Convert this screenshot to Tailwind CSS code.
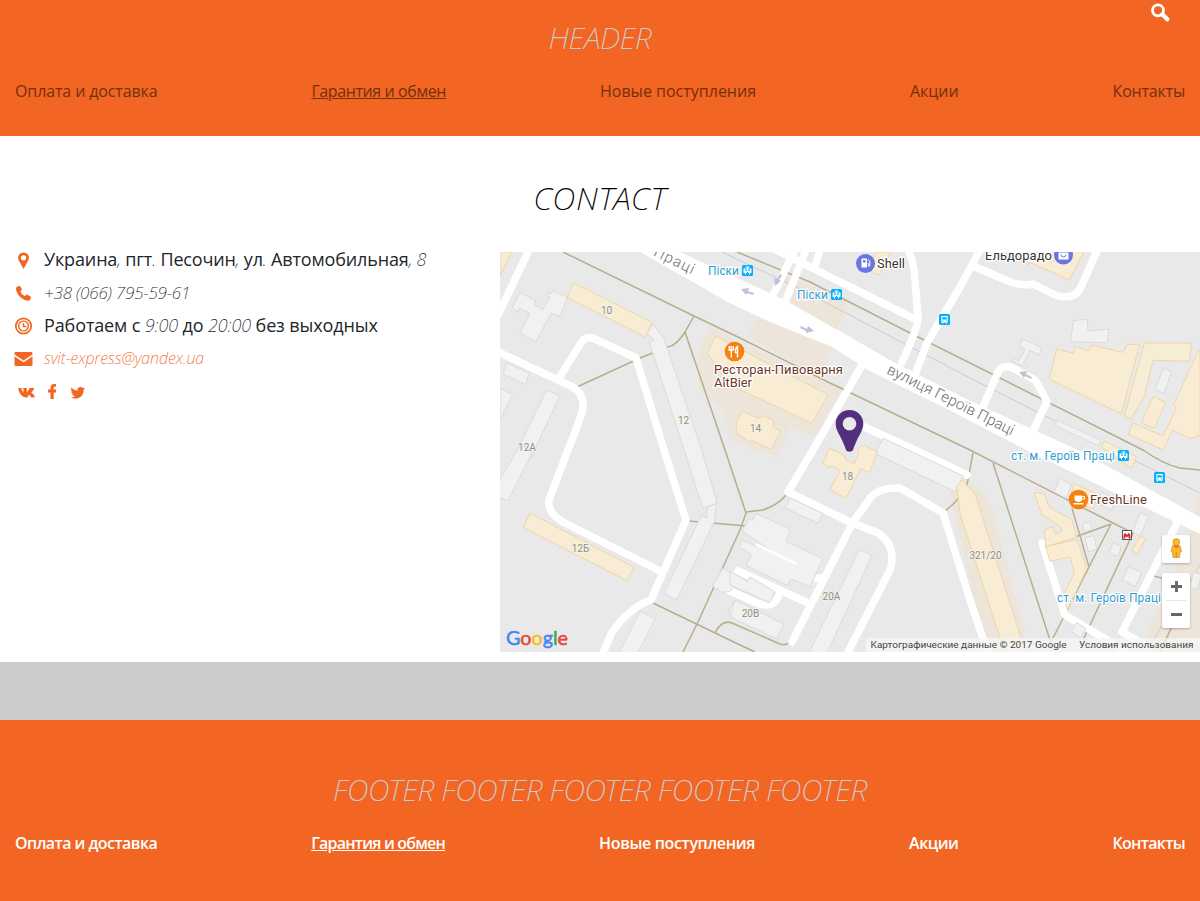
<!DOCTYPE html>
<html lang="ru">
<head>
<meta charset="utf-8">
<title>Contact</title>
<script src="https://cdn.jsdelivr.net/npm/@tailwindcss/browser@4"></script>
</head>
<body class="bg-[#ccc] font-['Open_Sans','Noto_Sans',sans-serif] text-[#212529] w-[1200px] h-[901px] overflow-hidden">
<header class="relative h-[136px] bg-[#f26522] pt-[18px]">
  <h1 class="text-center font-['Noto_Sans',sans-serif] font-extralight italic text-[30px] leading-[40px] text-[#ccc]"><span class="tracking-[-0.5px]">HEADER</span></h1>
  <svg class="absolute left-[1151px] top-[3px]" width="19" height="19" viewBox="0 0 19 19" fill="none" stroke="#fff"><circle cx="7" cy="7.3" r="5.5" stroke-width="2.8"/><path d="M11.5 11.5 16.3 16.3" stroke-width="4.4" stroke-linecap="round"/></svg>
  <nav class="mt-[21px] flex justify-between px-[15px] text-[16px] leading-6 text-[#73300f]">
    <a class="tracking-[-0.12px]">Оплата и доставка</a><a class="underline tracking-[-0.4px]">Гарантия и обмен</a><a>Новые поступления</a><a>Акции</a><a class="tracking-[-0.2px]">Контакты</a>
  </nav>
</header>
<main class="h-[526px] bg-white pt-[42px]">
  <h2 class="text-center font-['Noto_Sans',sans-serif] font-extralight italic text-[32px] leading-[40px] text-black tracking-[0.7px]">CONTACT</h2>
  <div class="mt-[34px] flex">
    <ul class="w-[500px] pl-[14px] text-[18px] leading-[33px] -mt-[9px]">
      <li class="flex h-[33px] items-center"><span class="w-[30px]"><svg width="19" height="20" viewBox="0 0 19 20" fill="#f26522"><path fill-rule="evenodd" d="M9.5 2.5c-3 0-5.4 2.3-5.4 5.3 0 1.4.6 2.4 1.100 3.400L9.500 19l4.300-7.800c.5-1 1.100-2 1.100-3.400 0-3-2.400-5.300-5.400-5.300zm0 2.700a2.600 2.600 0 1 1 0 5.200 2.600 2.600 0 0 1 0-5.200z"/></svg></span>
        <span class="whitespace-nowrap tracking-[-0.15px]">Украина<i class="font-['Noto_Sans'] font-extralight">,</i> пгт<i class="font-['Noto_Sans'] font-extralight">.</i> Песочин<i class="font-['Noto_Sans'] font-extralight">,</i> ул<i class="font-['Noto_Sans'] font-extralight">.</i> Автомобильная<i class="font-['Noto_Sans'] font-extralight">, 8</i></span></li>
      <li class="flex h-[33px] items-center"><span class="w-[30px]"><svg width="19" height="20" viewBox="0 0 19 20" fill="#f26522"><path d="M3 3.800 5.800 2.700 8 6.300 6.400 8.600c.8 2 2.400 3.600 4.400 4.500l1.900-1.600 4.400 2.200-.9 3c-.6 1-2 1.300-3.400.9C7.400 16.400 2.400 11 2 5.800c0-.9.300-1.600 1-2z"/></svg></span>
        <span class="font-['Noto_Sans'] font-extralight italic text-[17px] tracking-[-0.2px]">+38 (066) 795-59-61</span></li>
      <li class="flex h-[33px] items-center"><span class="w-[30px]"><svg width="19" height="20" viewBox="0 0 19 20" fill="none" stroke="#f26522"><circle cx="9.500" cy="10" r="7.700" stroke-width="1.700"/><circle cx="9.500" cy="10" r="4.900" stroke-width="1.400"/><path d="M9.500 7v3.600h3" stroke-width="1.500"/></svg></span>
        <span class="whitespace-nowrap tracking-[-0.12px]">Работаем с <i class="font-['Noto_Sans'] font-extralight">9:00</i> до <i class="font-['Noto_Sans'] font-extralight">20:00</i> без выходных</span></li>
      <li class="flex h-[33px] items-center"><span class="w-[30px]"><svg width="19" height="20" viewBox="0 0 19 20" fill="#f26522"><path d="M1 3h16.500l1 1v1.500L9.500 11.500.500 5.500V4z"/><path d="M.500 7.300l6.500 4.500 2.500 1.500 2.500-1.500 6.500-4.500V16l-1 1H1.500l-1-1z"/></svg></span>
        <span class="font-['Noto_Sans'] font-extralight italic text-[16px] text-[#f26522] tracking-[-0.1px]">svit-express@yandex.ua</span></li>
      <li class="flex h-[33px] items-center"><svg class="ml-[3px]" width="70" height="18" viewBox="17 383 70 18" fill="#f26522"><path d="M18 388h3.300c.5 2 1.300 3.700 2.200 4.500V389l-1-1h4.300v4.200c1-.7 2-2.400 2.800-4.200H34.300c-.4 1.800-1.700 3.200-3 4.500 1.500 1.200 3 2.800 3.800 4.800l-3.700.1c-.7-1-1.700-2.400-2.800-2.700-.3 1.500-.6 2.800-1.800 2.800-4.700.2-7.300-3.500-8.800-9.700z"/><path d="M56 384h-2c-2.300 0-3.500 1.400-3.500 3.700v1.800H48v3h2.500V399h3.200v-6.500h2.200l.4-3h-2.600v-1.700c0-.7.300-1.100 1.100-1.100H56z"/><path d="M85 388.300c-.6.3-1 .4-1.600.5.600-.4 1-.9 1.200-1.500-.6.300-1.200.6-1.900.7a3 3 0 0 0-5.200 2.600c-2.400-.1-4.500-1.200-6-3-.9 1.400-.4 3.100.9 4l-1.200-.3c0 1.400 1 2.500 2.300 2.800l-1.200.1c.4 1.200 1.500 1.900 2.700 2a6 6 0 0 1-4 1.100c5.500 3.300 12.600 0 12.600-7.400.5-.4 1-.9 1.400-1.600z"/></svg></li>
    </ul>
    <svg class="block shrink-0" width="700" height="400" viewBox="500 252 700 400" font-family="Roboto, sans-serif">
      <rect x="500" y="252" width="700" height="400" fill="#e9e9e9"/>
      <!-- commercial areas -->
      <g fill="#eee5da">
        <path d="M785 275 849 303 834 336 785 300zM757 316 832 346 820 380 748 336zM710 325 735 340 842 388 815 437 790 427 778 458 730 440 725 412 700 390 697 355z"/>
        <path d="M948 483 965 475 990 500 1030 652H985z"/>
        <path d="M1200 490V652H1160L1145 640 1185 545z"/>
      </g>
      <!-- footpaths -->
      <g fill="none" stroke="#b6ae8c" stroke-width="1.500">
        <path d="M563 252 694 316 740 338 830 383 970 450 1107 520 1133 533 1083 640"/>
        <path d="M737 252 810 282 920 338 970 363 1143 450Q1165 465 1180 468L1200 470"/>
        <path d="M694 316 685 332 725 450 746 513 740 530 697 624 683 652"/>
        <path d="M685 332Q677 345 668 347L640 358 577 387M689 521 746 526M746 512 763 510Q778 505 786 495M653 603 740 645 755 652M715 633Q722 619 732 623L780 644Q786 646 790 642"/>
        <path d="M993 463 1050 640M973 453 967 485Q960 500 945 511M1072 508 1089 567M1111 524 1089 567 1050 644M1075 537 1111 524M1154 576 1168 580M1175 620 1160 652"/>
      </g>
      <path d="M722 252 798 288 970 378 1057 422M1120 453 1200 493M1200 565 1150 645" fill="none" stroke="#ccc" stroke-width="1"/>
      <!-- side roads -->
      <g fill="none" stroke="#fff" stroke-width="7.500" stroke-linejoin="round" stroke-linecap="round">
        <path d="M529 250 498 315M498 352 558 380 573 387Q584 394 583 408Q582 415 568 450L549 500Q547 513 563 522L662 572"/>
        <path d="M559 378 581 343Q586 335 595 339L636 358 664 450 686 520 651 600Q630 607 612 632L603 653"/>
        <path d="M795 250 772 297M806 250 786 300M820 250 815 266M776 250 917 320M908 250Q914 262 915 280L918 318Q918 328 902 362M980 250 960 287 927 343 915 375"/>
        <path d="M973 266 1013 283Q1023 286 1033 284L1055 295Q1075 301 1081 287L1097 251"/>
        <path d="M983 407 998 372Q1001 365 1011 367L1035 380Q1040 387 1047 402L1032 433"/>
        <path d="M865 360 813 450 788 492 850 522 878 533Q892 542 892 558Q892 566 889 572L847 654"/>
        <path d="M860 425 915 450 967 475M792 642 853 522 871 497Q880 487 900 488L943 513 970 600 988 653"/>
        <path d="M808 603 738 571M728 590 757 603Q773 609 778 597L780 593M814 578 820 578M1042 543 1065 615 1107 640 1125 652M1177 523 1122 632M1122 632 1145 645"/>
      </g>
      <path fill="#fff" d="M640 252H680L730 275 770 293 788 302 850 337 890 360 960 396 1078 450 1200 517V534L1030 452 955 413 870 371 832 347 770 322 728 302z"/>
      <!-- grey buildings, grouped by map tile -->
      <g fill="#f1f1f1" stroke="#dadada" stroke-width="3">
        <g transform="translate(500 250) scale(.33333)">
          <path d="M60 127 107 152 104 165 128 178 150 142 141 136 147 126 154 131 161 121 203 143 184 187 178 200 154 189 107 276 60 248 90 191 60 174 52 187 38 170z"/>
          <path d="M22 339 88 370 76 404 8 372zM140 420 180 438 90 628 48 608zM0 415 38 434 0 510zM458 222 492 265 605 600 652 760 608 774 448 276 462 270 442 250z"/>
        </g>
        <g transform="translate(500 450) scale(.33333)">
          <path d="M60-15 98 5 24 153-5 140 0 90zM622 172 648 160 643 215 530 450 492 430 604 196 620 204zM420 484 466 506 412 612H356zM668 355 725 385 690 425 665 427 637 408zM705 450 730 462V505L684 488z"/>
        </g>
        <g transform="translate(730 250) scale(.33333)"><path d="M460 565 700 678 675 725 435 610z"/></g>
        <g transform="translate(960 250) scale(.33333)"><path d="M340 212 382 208 384 242 446 238 442 278 332 275zM188 267 245 293 238 315 210 301 190 340 207 348 203 354 156 333 160 325 177 333 195 298 178 290zM290 510 422 570 416 588 286 527zM610 355 635 365 612 430 585 418z"/></g>
        <g transform="translate(730 450) scale(.33333)">
          <path d="M180 143 278 190 264 220 165 174zM78 190 181 238 167 274 279 326 240 411 182 386 172 406 48 347 64 313 27 291 36 270 150 320 36 243 57 207 68 211zM388 298 426 316 290 612H235zM16 450 161 522 140 567 0 500zM0 365 52 394 60 381 135 425 118 458 0 405z"/>
        </g>
        <g transform="translate(960 450) scale(.33333)"><path d="M300 85 335 105 318 145 282 125zM540 188 566 200 540 258 518 245zM390 215 398 238 374 245 366 222zM375 263 402 257 410 298 385 305zM460 278 484 290 475 320 446 310zM505 350 545 368 526 410 487 390zM350 518 378 535 362 563 334 545zM425 125 468 150 455 180 410 160zM700 365 725 375 710 420 690 410z"/></g>
      </g>
      <path d="M757 545 795 563" stroke="#fff" stroke-width="3" stroke-linecap="round"/>
      <!-- highlighted buildings -->
      <g fill="#f9ecd5" stroke="#ecd6a6" stroke-width="3">
        <g transform="translate(500 250) scale(.33333)"><path d="M222 99 456 217 436 261 202 143zM0 6H35L0 78zM645 258 984 434 936 520 690 405 622 310z"/></g>
        <g transform="translate(500 450) scale(.33333)"><path d="M90 189 402 352 381 392 70 233z"/></g>
        <g transform="translate(730 250) scale(.33333)"><path d="M38 484 85 505 98 497 131 512 130 531 152 543 124 598 62 570 55 575 20 548 18 520zM405 58 440 6H482L447 75z"/></g>
        <g transform="translate(960 250) scale(.33333)"><path d="M180 35 240 0H375L327 90 210 37 205 44zM290 297 340 310 345 290 387 302 393 285 490 307 502 283 539 283 484 491 268 388zM553 279 695 279 688 334 579 331 553 440 513 507 493 498zM580 439 617 458 582 535 544 518zM720 300V555L693 566 637 541 609 600 504 552 519 519 609 558 650 473 640 466 714 305zM433 573 530 620 515 655 424 590z"/></g>
        <g transform="translate(730 450) scale(.33333)"><path d="M298-6 346 17 343 25 372 42 388 8 382 0 400-15 442 5 418 68 400 60 392 55 348 146 300 118 331 62 303 47 298 54 279 39z"/></g>
        <g transform="translate(960 450) scale(.33333)"><path d="M5 90 45 130 185 570 194 612H135L0 190-10 110zM222 126 255 133 268 173 335 208 350 262 257 290 254 238 278 230 287 253 307 242 302 232 244 192zM257 290 352 268 380 358 322 480 310 435 343 370 330 320 270 334zM342 100 410 132 400 178 330 145zM540 258 557 266 532 312 515 302z"/></g>
      </g>
      <!-- direction arrows -->
      <g fill="#bfc1dc"><path d="M741 289 749 288 748 291 754 293 753 295 747 293 746 295z"/><path d="M814 331 808 326 807 329 801 326 800 328 806 331 806 333zM775 286 774 278 777 279 780 274 782 275 779 280 781 281z"/><path fill="#c4c4c4" d="M1019 372 1027 371 1026 374 1032 377 1031 379 1025 376 1024 378z"/></g>
      <!-- labels -->
      <g stroke="#fff" stroke-width="2.500" paint-order="stroke" stroke-linejoin="round">
        <g font-size="10" fill="#8f8f86" stroke="#f5f3ea" stroke-width="1.500" text-anchor="middle">
          <text x="606.500" y="314">10</text><text x="683.500" y="424">12</text><text x="755.500" y="432">14</text><text x="527" y="451">12А</text><text x="580.500" y="552">12Б</text><text x="847.500" y="480">18</text><text x="831.500" y="600">20А</text><text x="750.500" y="617">20В</text><text x="985.500" y="559">321/20</text>
        </g>
        <g font-size="12" fill="#2f9dd2">
          <text x="708" y="275" textLength="31">Піски</text><text x="797" y="299" textLength="31">Піски</text><text x="1011" y="460" textLength="104">ст. м. Героїв Праці</text><text x="1057" y="602" textLength="104">ст. м. Героїв Праці</text>
        </g>
        <g font-size="13" fill="#333"><text x="877" y="268" textLength="28">Shell</text><text x="985" y="260" textLength="67">Ельдорадо</text></g>
        <g font-size="13" fill="#6e3629"><text x="714" y="374" textLength="129">Ресторан-Пивоварня</text><text x="714" y="387" textLength="38">AltBier</text><text x="1090" y="504" textLength="57">FreshLine</text></g>
        <g font-size="15" font-weight="300" fill="#6c6c6c"><text transform="translate(886 373) rotate(26.500)" textLength="140">вулиця Героїв Праці</text><text transform="translate(636 247) rotate(26)" textLength="62">їв Праці</text></g>
      </g>
      <!-- transit stops -->
      <defs>
        <g id="tram"><rect width="11" height="11" rx="1.500" fill="#00b0ff"/><path d="M1.500 3.500h8v4.500h-8z" fill="#fff"/><path d="M3.500 2h4M5.500 2v2M3.500 7.500v2M7.500 7.500v2" fill="none" stroke="#fff"/><path d="M3 4.500h2v1.200H3zM6 4.500h2v1.200H6zM5 7h1v1H5z" fill="#00b0ff"/></g>
        <g id="bus"><rect width="11" height="11" rx="1.500" fill="#00b0ff"/><path d="M2.300 2h6.400v6.500H8v1H6.800v-1H4.200v1H3v-1h-.7z" fill="#fff"/><path d="M3.200 3.300h4.600v2.200H3.200zM3.300 6.600h1v1h-1zM6.700 6.600h1v1h-1z" fill="#00b0ff"/></g>
      </defs>
      <use href="#tram" x="742" y="265"/><use href="#tram" x="831" y="289"/><use href="#tram" x="1118" y="450"/><use href="#bus" x="939" y="314"/><use href="#bus" x="1154" y="472"/>
      <!-- places -->
      <circle cx="865.500" cy="263.500" r="9.500" fill="#6a77e0"/><path d="M861.500 258.500h5.500v9h-5.500z" fill="#fff"/><path d="M863 260h2.500v2.500H863z" fill="#6a77e0"/><path d="M868 259.500l1.800 1.500v5h-1.500v-3" fill="none" stroke="#fff"/>
      <circle cx="1063.500" cy="255" r="9.500" fill="#6a77e0"/><path d="M1058.500 252.500h10v7h-10z" fill="#fff"/><path d="M1061 254.500a2.500 2.500 0 0 0 5 0" stroke="#6a77e0" fill="none"/>
      <circle cx="734.500" cy="351.500" r="9.800" fill="#f5820f"/><path d="M731.300 346v11.500M729.300 346v4h4v-4M737.500 357.500v-11c-2 1-2.200 3-2 6h2" fill="none" stroke="#fff" stroke-width="1.400"/>
      <circle cx="1078.500" cy="499.500" r="9.800" fill="#f5820f"/><path d="M1074.500 495.500h7.500v3.500c0 2-1.500 3-3.500 3s-4-1-4-3zM1073.500 503h10v1.500h-10z" fill="#fff"/><path d="M1082 496.500h2.500v2.500h-2.500" stroke="#fff" fill="none"/>
      <rect x="1122.500" y="530.500" width="9" height="9" fill="#fff" stroke="#555"/><path d="M1123.500 538.500v-3l1.500-3 2 2.500 2-2.500 1.500 3v3h-2V536l-1.500 1.500-1.500-1.500v2.500z" fill="#e3202b"/>
      <!-- marker -->
      <path fill="#53307f" fill-rule="evenodd" d="M849.500 410c-7.800 0-13.800 6-13.800 13.500 0 6 3 9.500 6.500 17 1.500 3.500 3 6.500 3.800 9.500 1 2.200 6 2.200 7 0 .8-3 2.300-6 3.800-9.500 3.500-7.500 6.500-11 6.500-17 0-7.500-6-13.500-13.800-13.500zm0 7a6.800 6.800 0 1 1 0 13.600 6.800 6.800 0 0 1 0-13.600z"/>
      <!-- controls -->
      <g style="filter:drop-shadow(0 1px 1px #0004)"><rect x="1162" y="535" width="28" height="28" rx="2" fill="#fff"/><rect x="1162" y="573" width="28" height="55" rx="2" fill="#fff"/></g>
      <path d="M1166 600.500h20" stroke="#e6e6e6"/><path d="M1171 586.500h11M1176.500 581v11M1171 614.500h11" stroke="#666" stroke-width="2.800"/>
      <path d="M1172.500 545.500h7.500l1.500 6-1.500.5-.5 5.500h-6.500l-.5-5.500-1.500-.5z" fill="#fbb829" stroke="#c78213" stroke-width=".6"/><circle cx="1176.300" cy="542" r="3.400" fill="#fbb829" stroke="#c78213" stroke-width=".6"/><path d="M1173.500 545.700h5.500l-2.700 3z" fill="#e5722a"/><path d="M1176.300 552v5" stroke="#c78213" stroke-width=".8"/>
      <!-- attribution -->
      <rect x="866" y="638" width="334" height="14" fill="#f5f5f5" fill-opacity=".75"/>
      <g font-size="9.500" fill="#444"><text x="870.500" y="648" textLength="196" lengthAdjust="spacingAndGlyphs">Картографические данные © 2017 Google</text><text x="1079" y="648" textLength="114.500" lengthAdjust="spacingAndGlyphs">Условия использования</text></g>
      <text x="506" y="645" textLength="62" lengthAdjust="spacingAndGlyphs" font-family="Lato, sans-serif" font-size="20" stroke-width=".5"><tspan fill="#4285f4" stroke="#4285f4">G</tspan><tspan fill="#ea4335" stroke="#ea4335">o</tspan><tspan fill="#fbbc05" stroke="#fbbc05">o</tspan><tspan fill="#4285f4" stroke="#4285f4">g</tspan><tspan fill="#34a853" stroke="#34a853">l</tspan><tspan fill="#ea4335" stroke="#ea4335">e</tspan></text>
    </svg>
  </div>
</main>
<footer class="mt-[58px] h-[181px] bg-[#f26522] pt-[50px]">
  <h2 class="text-center font-['Noto_Sans',sans-serif] font-extralight italic text-[30px] leading-[40px] text-[#ccc] tracking-[-0.53px]">FOOTER FOOTER FOOTER FOOTER FOOTER</h2>
  <nav class="mt-[21px] flex justify-between px-[15px] text-[16px] font-semibold leading-6 text-white">
    <a class="tracking-[-0.55px]">Оплата и доставка</a><a class="underline tracking-[-0.8px]">Гарантия и обмен</a><a class="tracking-[-0.35px]">Новые поступления</a><a class="tracking-[-0.5px]">Акции</a><a class="tracking-[-0.7px]">Контакты</a>
  </nav>
</footer>
</body>
</html>
